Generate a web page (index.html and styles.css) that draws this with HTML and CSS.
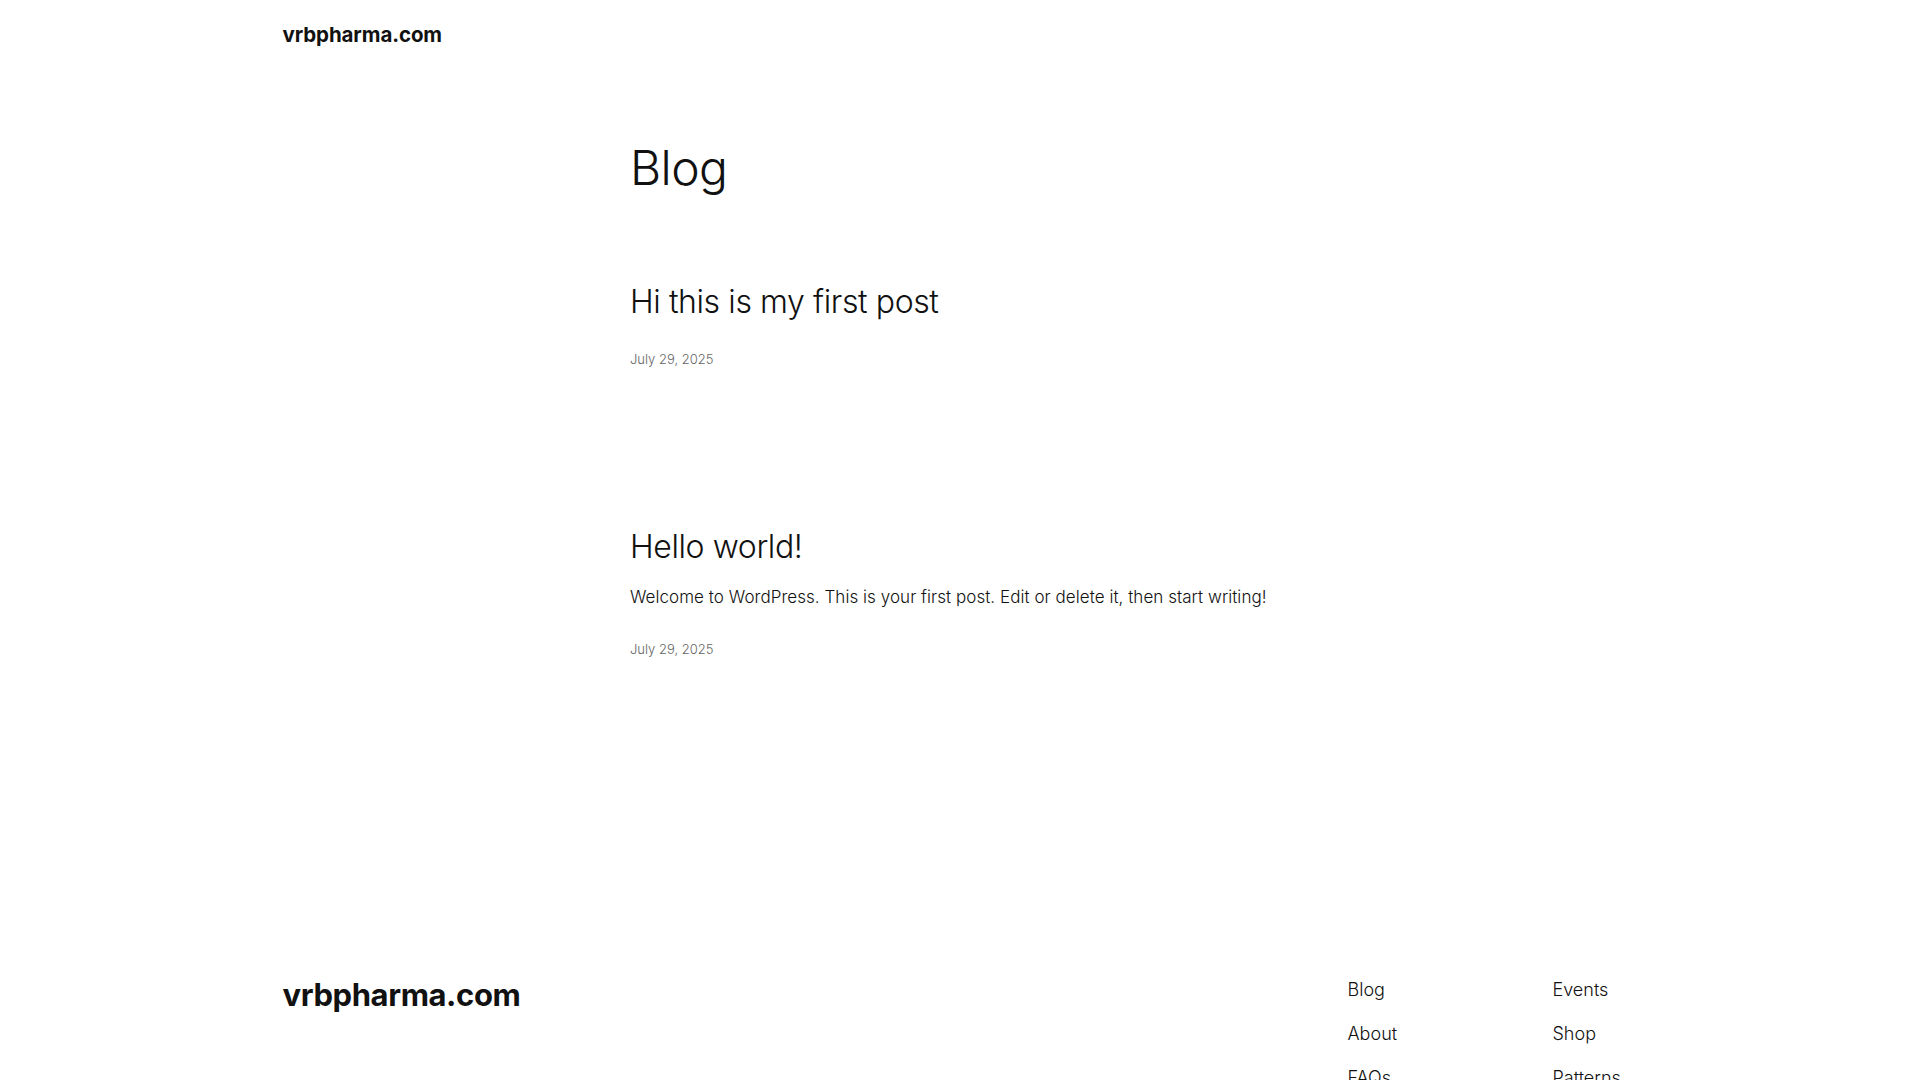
FILE: index.html
```html
<!DOCTYPE html>
<html lang="en">
<head>
<meta charset="utf-8">
<title>Blog – vrbpharma.com</title>
<link rel="stylesheet" href="styles.css">
</head>
<body>
<header class="site-header">
  <div class="wide">
    <a class="site-title" href="#">vrbpharma.com</a>
  </div>
</header>
<main class="site-main">
  <div class="content">
    <h1 class="page-title">Blog</h1>
    <ul class="posts">
      <li class="post">
        <h2 class="post-title"><a href="#">Hi this is my first post</a></h2>
        <time class="post-date">July 29, 2025</time>
      </li>
      <li class="post">
        <h2 class="post-title"><a href="#">Hello world!</a></h2>
        <p class="post-excerpt">Welcome to WordPress. This is your first post. Edit or delete it, then start writing!</p>
        <time class="post-date">July 29, 2025</time>
      </li>
    </ul>
  </div>
</main>
<footer class="site-footer">
  <div class="wide footer-top">
    <a class="footer-title" href="#">vrbpharma.com</a>
    <nav class="footer-nav">
      <ul class="nav-col">
        <li><a href="#">Blog</a></li>
        <li><a href="#">About</a></li>
        <li><a href="#">FAQs</a></li>
        <li><a href="#">Authors</a></li>
      </ul>
      <ul class="nav-col">
        <li><a href="#">Events</a></li>
        <li><a href="#">Shop</a></li>
        <li><a href="#">Patterns</a></li>
        <li><a href="#">Themes</a></li>
      </ul>
    </nav>
  </div>
  <div class="wide footer-bottom">
    <p class="credit-left">Twenty Twenty-Five</p>
    <p class="credit-right">Designed with <a href="#">WordPress</a></p>
  </div>
</footer>
</body>
</html>
```
FILE: styles.css
```css
html, body {
  margin: 0;
  padding: 0;
  background: #ffffff;
}
body {
  padding-right: 15px;
  font-family: Inter, "Noto Sans", "Liberation Sans", sans-serif;
  color: #111111;
  font-size: 20px;
  line-height: 1.4;
}
a {
  color: inherit;
  text-decoration: none;
}
ul {
  list-style: none;
  margin: 0;
  padding: 0;
}
.wide {
  max-width: 1340px;
  margin: 0 auto;
}
.site-header .wide {
  height: 70px;
  display: flex;
  align-items: center;
}
.site-title {
  font-size: 20.5px;
  font-weight: 700;
  letter-spacing: -0.1px;
  line-height: 1.2;
}
.site-main {
  padding: 71px 0 158px;
}
.content {
  max-width: 645px;
  margin: 0 auto;
}
.page-title {
  margin: 0;
  font-size: 48px;
  font-weight: 300;
  line-height: 54px;
  letter-spacing: -0.6px;
}
.posts {
  margin-top: 89px;
  display: flex;
  flex-direction: column;
  gap: 159px;
}
.post {
  display: flex;
  flex-direction: column;
}
.post-title {
  margin: 0;
  font-size: 32px;
  font-weight: 300;
  line-height: 36px;
  letter-spacing: -0.4px;
}
.post-excerpt {
  margin: 20px 0 0;
  font-size: 17px;
  font-weight: 300;
  line-height: 24px;
  letter-spacing: 0.05px;
}
.post-date {
  margin-top: 30px;
  font-size: 13px;
  font-weight: 300;
  line-height: 19.6px;
  color: #666666;
  letter-spacing: 0;
}
.post-excerpt + .post-date {
  margin-top: 31px;
}
.site-footer {
  padding: 160px 0 60px;
}
.footer-top {
  display: flex;
  justify-content: space-between;
  align-items: flex-start;
}
.footer-title {
  font-size: 31px;
  font-weight: 700;
  line-height: 36px;
  letter-spacing: -0.4px;
}
.footer-nav {
  margin-top: 1px;
  display: grid;
  grid-template-columns: 205px 70px;
}
.nav-col {
  display: flex;
  flex-direction: column;
  gap: 20px;
}
.nav-col li {
  font-size: 18px;
  font-weight: 300;
  line-height: 24px;
}
.footer-bottom {
  margin-top: 120px;
  display: flex;
  justify-content: space-between;
  font-size: 14px;
  color: #111111;
}
.footer-bottom p {
  margin: 0;
}
.credit-right a {
  text-decoration: underline;
}
```
